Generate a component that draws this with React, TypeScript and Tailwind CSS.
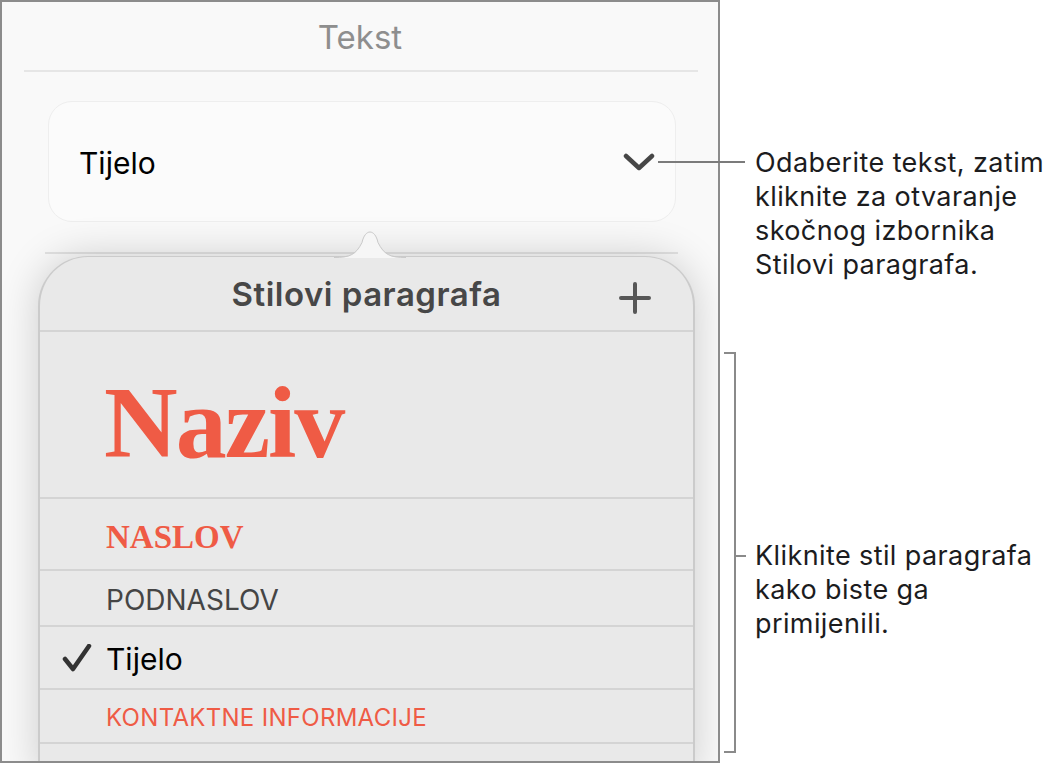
import React from "react";

const Chevron = () => (
  <svg width="32" height="18" viewBox="0 0 32 18" fill="none">
    <polyline points="3,3 16,15 29,3" stroke="#464646" strokeWidth="4.5" strokeLinecap="round" strokeLinejoin="round" />
  </svg>
);

const Plus = () => (
  <svg width="32" height="32" viewBox="0 0 32 32" fill="none">
    <path d="M16 2 V30 M2 16 H30" stroke="#575757" strokeWidth="4" strokeLinecap="round" />
  </svg>
);

const Check = () => (
  <svg width="30" height="28" viewBox="0 0 30 28" fill="none">
    <path d="M3 15 L11 25 L27 2" stroke="#333333" strokeWidth="4.5" strokeLinecap="round" strokeLinejoin="round" />
  </svg>
);

// Bump on top of the popover pointing at the style button
const PopoverArrow = () => (
  <svg width="72" height="30" viewBox="0 0 72 30" className="absolute left-[296px] top-0 z-10" fill="none">
    <path d="M0 30 C16 30 22 27 28 15 C31 1 41 1 44 15 C50 27 56 30 72 30 Z" fill="#f6f6f6" />
    <path d="M0 29.5 C16 29.5 22 26.5 28 14.5 C31 0.5 41 0.5 44 14.5 C50 26.5 56 29.5 72 29.5" stroke="#c9c9c9" strokeWidth="1" />
  </svg>
);

const Row = ({ h, children, last = false }: { h: string; children: React.ReactNode; last?: boolean }) => (
  <div className={`flex items-center ${h} ${last ? "" : "border-b-2 border-[#d4d4d4]"}`}>{children}</div>
);

export default function App() {
  return (
    <div className="relative flex h-[763px] w-[1053px] overflow-hidden bg-white font-['Inter','Liberation_Sans',sans-serif]">
      {/* Inspector panel */}
      <div className="relative h-[763px] w-[720px] shrink-0 overflow-hidden border-2 border-[#8c8c8c] bg-[#f9f9f9]">
        <div className="flex h-[68px] items-center justify-center pt-[3px] text-[33px] text-[#8e8e8e]">Tekst</div>
        <div className="ml-[22px] mr-[20px] h-[2px] bg-[#e6e6e6]" />
        <div className="ml-[46px] mr-[42px] mt-[29px] flex h-[121px] items-center justify-between rounded-[24px] border border-[#eeeeee] bg-[#fbfbfb] pl-[30px] pr-[20px]">
          <span className="pt-[3px] text-[30px] text-black">Tijelo</span>
          <Chevron />
        </div>
        <div className="ml-[43px] mr-[40px] mt-[30px] h-[2px] bg-[#e2e2e2]" />

        {/* Paragraph styles popover */}
        <div className="absolute left-[36px] top-[226px] w-[657px]">
          <PopoverArrow />
          <div className="mt-[28px] h-[520px] rounded-t-[50px] border-x-2 border-t border-[#cbcbcb] bg-[#e9e9e9] shadow-[0_0_40px_rgba(0,0,0,0.18)]">
            <div className="relative flex h-[75px] items-center justify-center border-b-2 border-[#d4d4d4]">
              <span className="pt-[2px] text-[33px] font-semibold tracking-[0.5px] text-[#474747]">Stilovi paragrafa</span>
              <div className="absolute right-[42px] top-[25px]">
                <Plus />
              </div>
            </div>
            <Row h="h-[167px]">
              <span className="pl-[64px] pt-[16px] font-['Liberation_Serif',serif] text-[102px] font-bold leading-none tracking-[-2px] text-[#ef5b45]">
                Naziv
              </span>
            </Row>
            <Row h="h-[72px]">
              <span className="pl-[66px] pt-[6px] font-['Liberation_Serif',serif] text-[33px] font-bold leading-none text-[#ef5b45]">
                NASLOV
              </span>
            </Row>
            <Row h="h-[56px]">
              <span className="pl-[66px] pt-[4px] text-[28px] leading-none text-[#454545]">PODNASLOV</span>
            </Row>
            <Row h="h-[63px]">
              <div className="flex items-center pl-[22px]">
                <Check />
                <span className="pl-[14px] pt-[2px] text-[30px] leading-none text-black">Tijelo</span>
              </div>
            </Row>
            <Row h="h-[54px]">
              <span className="pl-[66px] pt-[4px] text-[24px] leading-none tracking-[0.3px] text-[#ef5b45]">KONTAKTNE INFORMACIJE</span>
            </Row>
            <Row h="h-[60px]" last>
              <span />
            </Row>
          </div>
        </div>
      </div>

      {/* Callout texts */}
      <div className="flex flex-1 flex-col pl-[35px] text-[27px] leading-[34px] tracking-[0.4px] text-[#1c1c1e]">
        <p className="mt-[146px] whitespace-nowrap">
          Odaberite tekst, zatim
          <br />
          kliknite za otvaranje
          <br />
          skočnog izbornika
          <br />
          Stilovi paragrafa.
        </p>
        <p className="mt-[257px] whitespace-nowrap">
          Kliknite stil paragrafa
          <br />
          kako biste ga
          <br />
          primijenili.
        </p>
      </div>

      {/* Leader lines */}
      <div className="absolute left-[658px] top-[161px] h-[2px] w-[87px] bg-[#7b7b7b]" />
      <div className="absolute left-[724px] top-[352px] h-[401px] w-[12px] border-y-2 border-r-2 border-[#8a8a8a]" />
      <div className="absolute left-[736px] top-[555px] h-[2px] w-[10px] bg-[#8a8a8a]" />
    </div>
  );
}
